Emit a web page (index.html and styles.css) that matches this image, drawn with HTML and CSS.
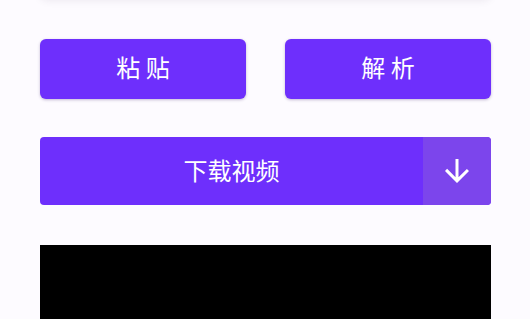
FILE: index.html
```html
<!DOCTYPE html>
<html lang="zh">
<head>
<meta charset="utf-8">
<link rel="stylesheet" href="styles.css">
</head>
<body>
<div class="page">
  <div class="top-card"></div>
  <div class="row">
    <button class="btn">粘 贴</button>
    <button class="btn">解 析</button>
  </div>
  <div class="download">
    <div class="download-main">下载视频</div>
    <div class="download-more">
      <svg width="36" height="36" viewBox="0 0 24 24"><path fill="#fff" d="M20 12l-1.41-1.41L13 16.17V4h-2v12.17l-5.58-5.59L4 12l8 8 8-8z"/></svg>
    </div>
  </div>
  <div class="video"></div>
</div>
</body>
</html>
```
FILE: styles.css
```css
html, body {
  margin: 0;
  padding: 0;
  background: #fdfbff;
  overflow: hidden;
  height: 319px;
}
.page {
  padding: 0 39px 0 40px;
  font-family: "Noto Sans CJK SC", "Noto Sans", sans-serif;
}
.top-card {
  height: 100px;
  margin-top: -102px;
  background: #fdf8fd;
  border-radius: 8px;
  box-shadow: 0 2px 8px rgba(60, 40, 80, 0.10);
}
.row {
  margin-top: 41px;
  display: grid;
  grid-template-columns: 1fr 1fr;
  gap: 39px;
}
.btn {
  height: 60px;
  border: none;
  border-radius: 6px;
  background: #6e2ffc;
  color: #fff;
  font-family: "Noto Sans CJK SC", "Noto Sans", sans-serif;
  font-size: 24px;
  line-height: 1;
  padding: 0 0 4px 0;
  box-shadow: 0 1px 3px rgba(60, 30, 110, 0.3);
}
.download {
  margin-top: 38px;
  height: 68px;
  display: flex;
  border-radius: 4px;
  overflow: hidden;
  background: #6e2ffc;
}
.download-main {
  flex: 1;
  display: flex;
  align-items: center;
  justify-content: center;
  color: #fff;
  font-size: 24px;
  line-height: 1;
  padding-bottom: 3px;
}
.download-more {
  width: 68px;
  background: #7c45ec;
  display: flex;
  align-items: center;
  justify-content: center;
}
.download-more svg {
  display: block;
}
.video {
  margin-top: 40px;
  height: 74px;
  background: #000;
}
```
